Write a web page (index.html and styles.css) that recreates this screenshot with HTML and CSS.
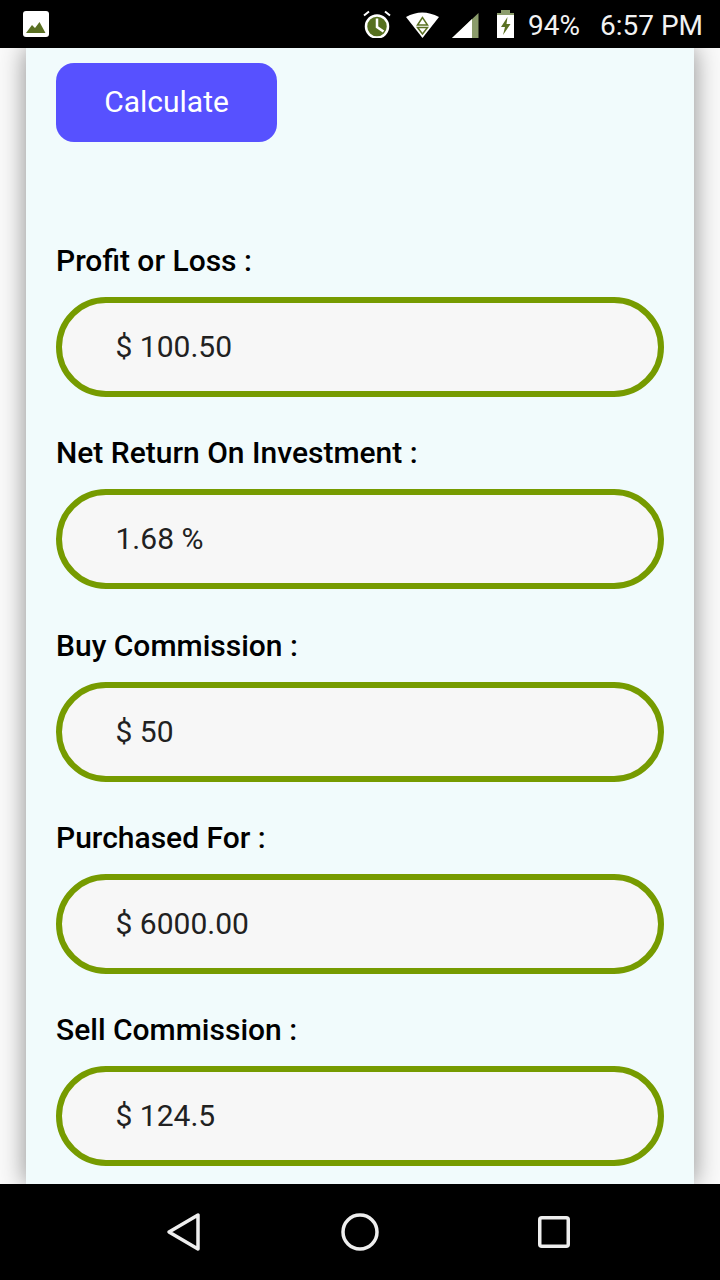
FILE: index.html
```html
<!DOCTYPE html>
<html lang="en">
<head>
  <meta charset="UTF-8">
  <meta name="viewport" content="width=device-width, initial-scale=1.0">
  <title>Profit Calculator</title>
  <link rel="stylesheet" href="styles.css">
</head>
<body>
  <div class="status">
    <svg class="pic" width="26" height="26" viewBox="0 0 26 26">
      <rect width="26" height="26" rx="3" fill="#fff"/>
      <path d="M3 22 L9 14 L12 17 L16.500 11 L22.500 22 Z" fill="#5a7022"/>
    </svg>
    <div class="status-right">
      <svg width="28" height="28" viewBox="0 0 28 28">
        <circle cx="14" cy="16.500" r="11" fill="#56701f" stroke="#fff" stroke-width="2.500"/>
        <path d="M1 5.500 L6 1.500 M27 5.500 L22 1.500" stroke="#fff" stroke-width="2" fill="none"/>
        <path d="M14 8.500 V17 L20.500 21.500" stroke="#fff" stroke-width="2.500" fill="none"/>
      </svg>
      <svg class="wifi" width="35" height="26" viewBox="0 0 35 26">
        <path d="M1 5 Q17 -4 34 5 L17.500 26 Z" fill="#fff"/>
        <path d="M17.500 5.500 L12.500 13 H22.500 Z M12.500 15.500 H22.500 L17.500 22 Z" fill="none" stroke="#5a7022" stroke-width="1.500"/>
      </svg>
      <svg class="signal" width="27" height="25" viewBox="0 0 27 25">
        <path d="M0 25 L26.500 0 V25 Z" fill="#8b9c6b"/>
        <path d="M0 25 L20 6 V25 Z" fill="#fff"/>
      </svg>
      <svg class="battery" width="19" height="28" viewBox="0 0 19 28">
        <path d="M5 0 H14 V3 H18 V28 H1 V3 H5 Z" fill="#fff"/>
        <path d="M5 0 H14 V3 H18 V5 H1 V3 H5 Z" fill="#8b9c6b"/>
        <path d="M11.500 7 L5 17 H9 L7 25 L14.500 14 H10.500 Z" fill="#5a7022"/>
      </svg>
      <span class="pct">94%</span>
      <span class="time">6:57 PM</span>
    </div>
  </div>

  <div class="main">
    <div class="card">
      <button class="calc">Calculate</button>

      <div class="results">
        <div class="group">
          <div class="name">Profit or Loss :</div>
          <div class="field">$ 100.50</div>
        </div>
        <div class="group">
          <div class="name">Net Return On Investment :</div>
          <div class="field">1.68 %</div>
        </div>
        <div class="group">
          <div class="name">Buy Commission :</div>
          <div class="field">$ 50</div>
        </div>
        <div class="group">
          <div class="name">Purchased For :</div>
          <div class="field">$ 6000.00</div>
        </div>
        <div class="group">
          <div class="name">Sell Commission :</div>
          <div class="field">$ 124.5</div>
        </div>
      </div>
    </div>
  </div>

  <div class="nav">
    <svg width="36" height="40" viewBox="0 0 36 40">
      <path d="M3 20 L32 3 V37 Z" fill="none" stroke="#eee" stroke-width="3.500" stroke-linejoin="round"/>
    </svg>
    <svg class="home" width="40" height="40" viewBox="0 0 40 40">
      <circle cx="20" cy="20" r="17" fill="none" stroke="#eee" stroke-width="3.500"/>
    </svg>
    <svg class="recent" width="36" height="36" viewBox="0 0 36 36">
      <rect x="3.750" y="3.750" width="28.500" height="28.500" rx="2" fill="none" stroke="#eee" stroke-width="3.500"/>
    </svg>
  </div>
</body>
</html>
```

FILE: styles.css
```css
body {
  margin: 0;
  width: 720px;
  height: 1280px;
  display: flex;
  flex-direction: column;
  overflow: hidden;
  background-color: #fafafa;
  font-family: Roboto, sans-serif;
}

.status {
  position: relative;
  z-index: 2;
  height: 48px;
  flex-shrink: 0;
  display: flex;
  align-items: center;
  justify-content: space-between;
  padding: 0 17px 0 23px;
  background-color: #000;
  color: #f2f2f2;
  font-size: 28px;
}
.status-right {
  display: flex;
  align-items: center;
}
.wifi {
  margin-left: 14px;
  margin-top: 2px;
}
.signal {
  margin-left: 12px;
  margin-top: 3px;
}
.battery {
  margin-left: 17px;
}
.pct {
  margin-left: 13px;
  margin-top: 2px;
}
.time {
  margin-left: 20px;
  margin-top: 2px;
}

.main {
  flex: 1;
  min-height: 0;
  overflow: hidden;
  padding: 0 26px;
}
.card {
  height: 100%;
  padding: 15px 30px 0;
  box-sizing: border-box;
  background-color: #f1fbfc;
  box-shadow: 0 0 24px rgba(0, 0, 0, 0.45);
}

.calc {
  display: block;
  width: 221px;
  height: 79px;
  padding: 0 0 2px;
  border: none;
  border-radius: 18px;
  background-color: #5751ff;
  color: #fff;
  font-family: Roboto, sans-serif;
  font-size: 30px;
}

.results {
  margin-top: 100px;
}
.group {
  margin-bottom: 37.25px;
}
.name {
  height: 36px;
  line-height: 38px;
  margin-bottom: 19px;
  font-size: 30px;
  font-weight: 500;
  color: #000;
}
.field {
  height: 100px;
  line-height: 87px;
  box-sizing: border-box;
  padding-left: 53.5px;
  border: 6px solid #769b00;
  border-radius: 50px;
  background-color: #f7f7f7;
  color: #212121;
  font-size: 30px;
}

.nav {
  position: relative;
  z-index: 2;
  height: 96px;
  flex-shrink: 0;
  display: flex;
  align-items: center;
  padding-left: 166px;
  background-color: #000;
}
.home {
  margin-left: 138px;
}
.recent {
  margin-left: 156px;
}
```
